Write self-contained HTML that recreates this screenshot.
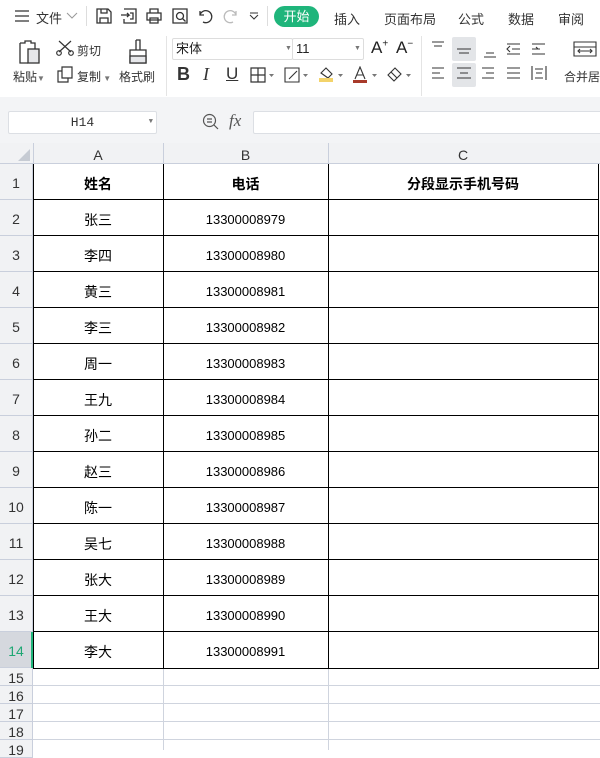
<!DOCTYPE html><html><head><meta charset="utf-8"><style>
*{margin:0;padding:0;box-sizing:border-box}
body{width:600px;height:750px;overflow:hidden;background:#fff;font-family:"Liberation Sans","Noto Sans CJK SC",sans-serif;position:relative;color:#222}
.a{position:absolute}
.t{font-size:12px;color:#333}
.ic{position:absolute}
.cell{position:absolute;display:flex;align-items:center;justify-content:center;font-size:14px;color:#000;padding-top:3px}
.rh{position:absolute;left:0;width:33px;background:#f1f2f4;border-bottom:1px solid #c9cfdc;border-right:1px solid #c9cfdc;font-size:14px;color:#333;display:flex;align-items:center;justify-content:center;padding-top:2px}
</style></head><body>
<div class="a" style="left:0;top:0;width:600px;height:33px;background:#fff"></div>
<svg class="ic" style="left:14px;top:9px" width="16" height="14"><path d="M1 2h14M1 7h14M1 12h14" stroke="#333" stroke-width="1.3"/></svg>
<div class="a t" style="left:36px;top:8px;font-size:13px">文件</div>
<svg class="ic" style="left:66px;top:12px" width="12" height="8"><path d="M1 1l5 5 5-5" stroke="#999" fill="none"/></svg>
<div class="a" style="left:86px;top:6px;width:1px;height:20px;background:#ddd"></div>
<svg class="ic" style="left:95px;top:7px" width="18" height="18" fill="none" stroke="#333" stroke-width="1.3"><path d="M2 2h11l3 3v11H2z M6 2v4h6V2 M5 16v-5h8v5"/></svg>
<svg class="ic" style="left:120px;top:7px" width="18" height="18" fill="none" stroke="#333" stroke-width="1.3"><path d="M4 2h12v14H4v-4 M1 8h8l-2-2 M9 8l-2 2 M10 6h3v6h-3"/></svg>
<svg class="ic" style="left:145px;top:7px" width="18" height="18" fill="none" stroke="#333" stroke-width="1.3"><path d="M5 6V2h8v4 M2 6h14v7H2z M5 11h8v5H5z"/></svg>
<svg class="ic" style="left:171px;top:7px" width="18" height="18" fill="none" stroke="#333" stroke-width="1.3"><path d="M2 2h14v14H2z"/><circle cx="9" cy="9" r="3.5"/><path d="M11.5 11.5l3 3"/></svg>
<svg class="ic" style="left:196px;top:7px" width="18" height="18" fill="none" stroke="#333" stroke-width="1.3"><path d="M4 4v4h4 M4 8a6 6 0 1 1 3 7"/></svg>
<svg class="ic" style="left:222px;top:7px" width="18" height="18" fill="none" stroke="#bbb" stroke-width="1.3"><path d="M14 4v4h-4 M14 8a6 6 0 1 0 -3 7"/></svg>
<svg class="ic" style="left:249px;top:12px" width="10" height="8"><path d="M1 1h8M1 3l4 4 4-4" stroke="#333" fill="none"/></svg>
<div class="a" style="left:267px;top:6px;width:1px;height:20px;background:#ddd"></div>
<div class="a" style="left:274px;top:6px;width:45px;height:21px;border-radius:11px;background:#1fb57b;color:#fff;font-size:13px;text-align:center;line-height:21px">开始</div>
<div class="a t" style="left:334px;top:9px;font-size:13px">插入</div>
<div class="a t" style="left:384px;top:9px;font-size:13px">页面布局</div>
<div class="a t" style="left:458px;top:9px;font-size:13px">公式</div>
<div class="a t" style="left:508px;top:9px;font-size:13px">数据</div>
<div class="a t" style="left:558px;top:9px;font-size:13px">审阅</div>
<svg class="ic" style="left:18px;top:39px" width="24" height="26" fill="none" stroke="#333" stroke-width="1.3"><path d="M2 4h5V2h6v2h4v6 M2 4v20h8"/><rect x="10" y="10" width="11" height="14" fill="#e6e7ea"/></svg>
<div class="a t" style="left:13px;top:68px">粘贴<span style="color:#777;font-size:8px">▼</span></div>
<svg class="ic" style="left:56px;top:40px" width="18" height="16" fill="none" stroke="#333" stroke-width="1.2"><path d="M3 1l12 11M15 1L3 12"/><circle cx="3" cy="13" r="2.3"/><circle cx="15" cy="13" r="2.3"/></svg>
<div class="a t" style="left:77px;top:42px">剪切</div>
<svg class="ic" style="left:57px;top:66px" width="16" height="17" fill="none" stroke="#333" stroke-width="1.2"><path d="M5 1h10v11H5z M5 5H1v11h10v-4"/></svg>
<div class="a t" style="left:77px;top:68px">复制<span style="color:#777;font-size:8px"> ▼</span></div>
<svg class="ic" style="left:128px;top:39px" width="20" height="26" fill="none" stroke="#333" stroke-width="1.3"><path d="M8 1h4v10 M8 1v10 M2 11h16v13H2z"/><rect x="2" y="17" width="16" height="7" fill="#e6e7ea"/></svg>
<div class="a t" style="left:119px;top:68px">格式刷</div>
<div class="a" style="left:166px;top:36px;width:1px;height:60px;background:#e4e4e4"></div>
<div class="a" style="left:172px;top:38px;width:121px;height:22px;border:1px solid #ddd;border-radius:2px;font-size:13px;line-height:20px;padding-left:3px">宋体<span style="position:absolute;left:112px;color:#777;font-size:7px">▼</span></div>
<div class="a" style="left:292px;top:38px;width:72px;height:22px;border:1px solid #ddd;border-radius:2px;font-size:13px;line-height:20px;padding-left:3px">11<span style="position:absolute;left:61px;color:#777;font-size:7px">▼</span></div>
<div class="a" style="left:371px;top:38px;font-size:17px">A<sup style="font-size:10px">+</sup></div>
<div class="a" style="left:396px;top:38px;font-size:17px">A<sup style="font-size:10px">−</sup></div>
<div class="a" style="left:177px;top:64px;font-size:18px;font-weight:bold;color:#333">B</div>
<div class="a" style="left:203px;top:64px;font-size:18px;font-style:italic;font-family:'Liberation Serif';color:#333">I</div>
<div class="a" style="left:226px;top:64px;font-size:17px;color:#333;text-decoration:underline">U</div>
<svg class="ic" style="left:250px;top:67px" width="26" height="16" fill="none" stroke="#333" stroke-width="1.2"><path d="M1 1h14v14H1z M8 1v14 M1 8h14"/><path d="M19 7l2.5 3 2.5-3" fill="#777" stroke="none"/></svg>
<svg class="ic" style="left:284px;top:67px" width="26" height="16" fill="none" stroke="#333" stroke-width="1.1"><path d="M1 1h14v14H1z M5 12l8-8"/><path d="M19 7l2.5 3 2.5-3" fill="#777" stroke="none"/></svg>
<svg class="ic" style="left:318px;top:66px" width="28" height="18" fill="none" stroke="#333" stroke-width="1.1"><path d="M3 7l5-5 6 6-4 4z"/><rect x="1" y="12" width="14" height="4" fill="#f3d36a" stroke="none"/><path d="M20 8l2.5 3 2.5-3" fill="#777" stroke="none"/></svg>
<svg class="ic" style="left:352px;top:66px" width="28" height="18" fill="none" stroke="#333" stroke-width="1.1"><path d="M3 13L8 1l5 12 M5 9h6"/><rect x="1" y="14" width="14" height="3" fill="#a83a2a" stroke="none"/><path d="M20 8l2.5 3 2.5-3" fill="#777" stroke="none"/></svg>
<svg class="ic" style="left:386px;top:66px" width="28" height="18" fill="none" stroke="#333" stroke-width="1.1"><path d="M2 9l7-7 6 6-7 7z M5 6l6 6"/><path d="M20 8l2.5 3 2.5-3" fill="#777" stroke="none"/></svg>
<div class="a" style="left:421px;top:36px;width:1px;height:60px;background:#e4e4e4"></div>
<div class="a" style="left:452px;top:37px;width:24px;height:24px;background:#e3e5e8;border-radius:2px"></div>
<div class="a" style="left:452px;top:63px;width:24px;height:24px;background:#e3e5e8;border-radius:2px"></div>
<svg class="ic" style="left:430px;top:40px" width="170" height="46" fill="none" stroke="#333" stroke-width="1.1">
<path d="M2 2h12M4 6h8"/><path d="M27 9h14M29 13h10"/><path d="M54 17h12M56 13h8"/>
<path d="M77 4h13M82 9h8M77 14h13M80 6l-3 3 3 3"/><path d="M102 4h13M102 9h8M102 14h13M103 9h5l-2-2"/>
<path d="M2 28h12M2 33h8M2 38h12"/><path d="M27 28h14M30 33h8M27 38h14"/><path d="M52 28h12M56 33h8M52 38h12"/>
<path d="M77 28h13M77 33h13M77 38h13"/><path d="M102 26v14M116 26v14M105 29h8M105 38h8M106 33h6"/>
<path d="M144 2h22v14h-22z M144 7h22M149 11h12M150 9l-2 2 2 2M160 9l2 2-2 2"/></svg>
<div class="a t" style="left:564px;top:68px">合并居</div>
<div class="a" style="left:0;top:97px;width:600px;height:4px;background:#f3f4f6"></div>
<div class="a" style="left:0;top:100px;width:600px;height:43px;background:#f3f4f6"></div>
<div class="a" style="left:8px;top:111px;width:149px;height:23px;background:#fff;border:1px solid #dcdfe4;border-radius:2px;font-family:'Liberation Mono';font-size:13px;text-align:center;line-height:21px;color:#333">H14<span style="position:absolute;right:3px;font-size:7px;color:#777">▼</span></div>
<svg class="ic" style="left:202px;top:113px" width="18" height="18" fill="none" stroke="#555" stroke-width="1.2"><circle cx="7.5" cy="7.5" r="6"/><path d="M5 6h5M5 9h5M12 12l4 4"/></svg>
<div class="a" style="left:229px;top:111px;font-family:'Liberation Serif';font-style:italic;font-size:17px;color:#555">fx</div>
<div class="a" style="left:253px;top:111px;width:350px;height:23px;background:#fff;border:1px solid #dcdfe4;border-radius:2px"></div>
<div class="a" style="left:0;top:143px;width:600px;height:21px;background:#f1f2f4;border-bottom:1px solid #c9cfdc"></div>
<svg class="ic" style="left:17px;top:148px" width="14" height="14"><path d="M13 1v12H1z" fill="#c6cbd3"/></svg>
<div class="a" style="left:33px;top:143px;width:1px;height:21px;background:#c9cfdc"></div>
<div class="a" style="left:163px;top:143px;width:1px;height:21px;background:#c9cfdc"></div>
<div class="a" style="left:328px;top:143px;width:1px;height:21px;background:#c9cfdc"></div>
<div class="cell" style="left:33px;top:143px;width:130px;height:21px;font-size:14px;color:#333">A</div>
<div class="cell" style="left:163px;top:143px;width:165px;height:21px;font-size:14px;color:#333">B</div>
<div class="cell" style="left:328px;top:143px;width:270px;height:21px;font-size:14px;color:#333">C</div>
<div class="a" style="left:163px;top:668px;width:1px;height:82px;background:#cfd4de"></div>
<div class="a" style="left:328px;top:668px;width:1px;height:82px;background:#cfd4de"></div>
<div class="a" style="left:33px;top:685px;width:567px;height:1px;background:#cfd4de"></div>
<div class="a" style="left:33px;top:703px;width:567px;height:1px;background:#cfd4de"></div>
<div class="a" style="left:33px;top:721px;width:567px;height:1px;background:#cfd4de"></div>
<div class="a" style="left:33px;top:739px;width:567px;height:1px;background:#cfd4de"></div>
<div class="rh" style="top:668px;height:18px">15</div>
<div class="rh" style="top:686px;height:18px">16</div>
<div class="rh" style="top:704px;height:18px">17</div>
<div class="rh" style="top:722px;height:18px">18</div>
<div class="rh" style="top:740px;height:18px">19</div>
<div class="a" style="left:33px;top:164px;width:566px;height:505px;border:1px solid #000;border-left:none;border-top:none"></div>
<div class="a" style="left:163px;top:164px;width:1px;height:504px;background:#000"></div>
<div class="a" style="left:328px;top:164px;width:1px;height:504px;background:#000"></div>
<div class="a" style="left:33px;top:164px;width:1px;height:504px;background:#000"></div>

<div class="rh" style="top:164px;height:36px">1</div><div class="a" style="left:34px;top:199px;width:565px;height:1px;background:#000"></div>
<div class="cell" style="left:33px;top:164px;width:130px;height:36px;font-weight:bold">姓名</div><div class="cell" style="left:163px;top:164px;width:165px;height:36px;font-weight:bold">电话</div><div class="cell" style="left:328px;top:164px;width:270px;height:36px;font-weight:bold">分段显示手机号码</div>
<div class="rh" style="top:200px;height:36px">2</div><div class="a" style="left:34px;top:235px;width:565px;height:1px;background:#000"></div><div class="cell" style="left:33px;top:200px;width:130px;height:36px">张三</div><div class="cell" style="left:163px;top:200px;width:165px;height:36px;font-size:13px">13300008979</div>
<div class="rh" style="top:236px;height:36px">3</div><div class="a" style="left:34px;top:271px;width:565px;height:1px;background:#000"></div><div class="cell" style="left:33px;top:236px;width:130px;height:36px">李四</div><div class="cell" style="left:163px;top:236px;width:165px;height:36px;font-size:13px">13300008980</div>
<div class="rh" style="top:272px;height:36px">4</div><div class="a" style="left:34px;top:307px;width:565px;height:1px;background:#000"></div><div class="cell" style="left:33px;top:272px;width:130px;height:36px">黄三</div><div class="cell" style="left:163px;top:272px;width:165px;height:36px;font-size:13px">13300008981</div>
<div class="rh" style="top:308px;height:36px">5</div><div class="a" style="left:34px;top:343px;width:565px;height:1px;background:#000"></div><div class="cell" style="left:33px;top:308px;width:130px;height:36px">李三</div><div class="cell" style="left:163px;top:308px;width:165px;height:36px;font-size:13px">13300008982</div>
<div class="rh" style="top:344px;height:36px">6</div><div class="a" style="left:34px;top:379px;width:565px;height:1px;background:#000"></div><div class="cell" style="left:33px;top:344px;width:130px;height:36px">周一</div><div class="cell" style="left:163px;top:344px;width:165px;height:36px;font-size:13px">13300008983</div>
<div class="rh" style="top:380px;height:36px">7</div><div class="a" style="left:34px;top:415px;width:565px;height:1px;background:#000"></div><div class="cell" style="left:33px;top:380px;width:130px;height:36px">王九</div><div class="cell" style="left:163px;top:380px;width:165px;height:36px;font-size:13px">13300008984</div>
<div class="rh" style="top:416px;height:36px">8</div><div class="a" style="left:34px;top:451px;width:565px;height:1px;background:#000"></div><div class="cell" style="left:33px;top:416px;width:130px;height:36px">孙二</div><div class="cell" style="left:163px;top:416px;width:165px;height:36px;font-size:13px">13300008985</div>
<div class="rh" style="top:452px;height:36px">9</div><div class="a" style="left:34px;top:487px;width:565px;height:1px;background:#000"></div><div class="cell" style="left:33px;top:452px;width:130px;height:36px">赵三</div><div class="cell" style="left:163px;top:452px;width:165px;height:36px;font-size:13px">13300008986</div>
<div class="rh" style="top:488px;height:36px">10</div><div class="a" style="left:34px;top:523px;width:565px;height:1px;background:#000"></div><div class="cell" style="left:33px;top:488px;width:130px;height:36px">陈一</div><div class="cell" style="left:163px;top:488px;width:165px;height:36px;font-size:13px">13300008987</div>
<div class="rh" style="top:524px;height:36px">11</div><div class="a" style="left:34px;top:559px;width:565px;height:1px;background:#000"></div><div class="cell" style="left:33px;top:524px;width:130px;height:36px">吴七</div><div class="cell" style="left:163px;top:524px;width:165px;height:36px;font-size:13px">13300008988</div>
<div class="rh" style="top:560px;height:36px">12</div><div class="a" style="left:34px;top:595px;width:565px;height:1px;background:#000"></div><div class="cell" style="left:33px;top:560px;width:130px;height:36px">张大</div><div class="cell" style="left:163px;top:560px;width:165px;height:36px;font-size:13px">13300008989</div>
<div class="rh" style="top:596px;height:36px">13</div><div class="a" style="left:34px;top:631px;width:565px;height:1px;background:#000"></div><div class="cell" style="left:33px;top:596px;width:130px;height:36px">王大</div><div class="cell" style="left:163px;top:596px;width:165px;height:36px;font-size:13px">13300008990</div>
<div class="rh" style="top:632px;height:36px;background:#d5d8de;color:#1fa774">14</div><div class="a" style="left:31px;top:632px;width:2px;height:36px;background:#1fb57b"></div><div class="cell" style="left:33px;top:632px;width:130px;height:36px">李大</div><div class="cell" style="left:163px;top:632px;width:165px;height:36px;font-size:13px">13300008991</div>
</body></html>
